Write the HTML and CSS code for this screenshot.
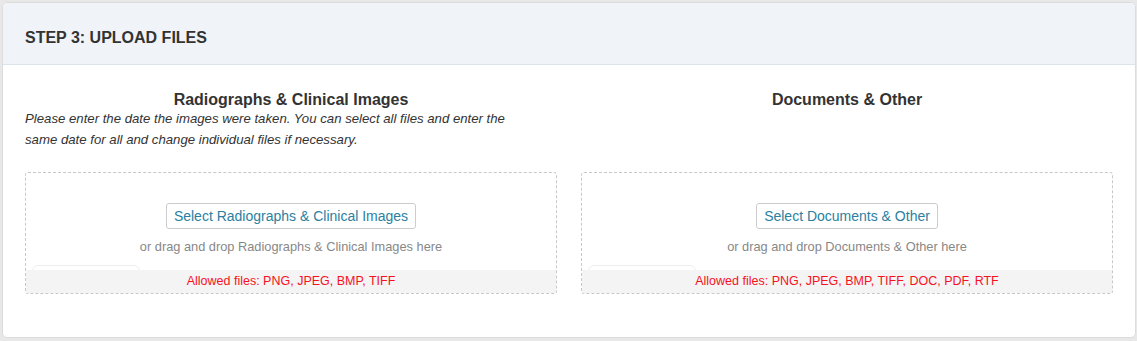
FILE: index.html
```html
<!DOCTYPE html>
<html lang="en">
<head>
    <meta charset="UTF-8">
    <meta name="viewport" content="width=device-width, initial-scale=1.0">
    <title>Upload Files</title>
    <link rel="stylesheet" href="styles.css">
</head>
<body>
    <div class="panel">
        <div class="panel-heading">Step 3: Upload Files</div>
        <div class="panel-body">
            <div class="upload-col">
                <h3>Radiographs &amp; Clinical Images</h3>
                <p class="note">Please enter the date the images were taken. You can select all files and enter the same date for all and change individual files if necessary.</p>
                <div class="dropzone">
                    <button class="select-btn">Select Radiographs &amp; Clinical Images</button>
                    <p class="drag-text">or drag and drop Radiographs &amp; Clinical Images here</p>
                    <div class="file-tab"></div>
                    <div class="allowed">Allowed files: PNG, JPEG, BMP, TIFF</div>
                </div>
            </div>
            <div class="upload-col">
                <h3>Documents &amp; Other</h3>
                <p class="note"></p>
                <div class="dropzone">
                    <button class="select-btn">Select Documents &amp; Other</button>
                    <p class="drag-text">or drag and drop Documents &amp; Other here</p>
                    <div class="file-tab"></div>
                    <div class="allowed">Allowed files: PNG, JPEG, BMP, TIFF, DOC, PDF, RTF</div>
                </div>
            </div>
        </div>
    </div>
</body>
</html>
```

FILE: styles.css
```css
html, body {
    margin: 0;
    padding: 0;
}
body {
    font-family: "Liberation Sans", Arial, Helvetica, sans-serif;
    background-color: #e8e8e8;
    color: #333;
    padding: 2px 1px 0 2px;
}
.panel {
    background-color: #fff;
    border: 1px solid #dcdcdc;
    border-radius: 5px;
    overflow: hidden;
}
.panel-heading {
    background-color: #f0f3f8;
    border-bottom: 1px solid #dde3eb;
    padding: 25px 22px 16px;
    line-height: 20px;
    font-size: 16px;
    font-weight: bold;
    text-transform: uppercase;
    color: #333;
}
.panel-body {
    display: grid;
    grid-template-columns: 1fr 1fr;
    gap: 24px;
    padding: 26px 22px 43px;
}
.upload-col h3 {
    margin: 0;
    font-size: 16px;
    line-height: 17px;
    text-align: center;
    color: #333;
}
.note {
    margin: 0;
    min-height: 42px;
    max-width: 500px;
    font-size: 13.2px;
    line-height: 21px;
    font-style: italic;
    color: #333;
}
.dropzone {
    margin-top: 22px;
    border: 1px dashed #c8c8c8;
    border-radius: 3px;
    padding-top: 30px;
    text-align: center;
    overflow: hidden;
}
.select-btn {
    font-family: inherit;
    font-size: 14px;
    height: 26px;
    padding: 0 7px;
    background-color: #fff;
    color: #2b7f9f;
    border: 1px solid #ccc;
    border-radius: 3px;
    cursor: pointer;
}
.drag-text {
    margin: 10px 0 0;
    font-size: 12.8px;
    line-height: 16px;
    color: #888;
}
.file-tab {
    width: 106px;
    height: 8px;
    margin: 10px 0 0 6px;
    border: 1px solid #eee;
    border-radius: 6px 6px 0 0;
    background-color: #fff;
}
.allowed {
    position: relative;
    margin-top: -5px;
    height: 23px;
    line-height: 23px;
    background-color: #f4f4f4;
    color: #f5121e;
    font-size: 12.5px;
}
```
